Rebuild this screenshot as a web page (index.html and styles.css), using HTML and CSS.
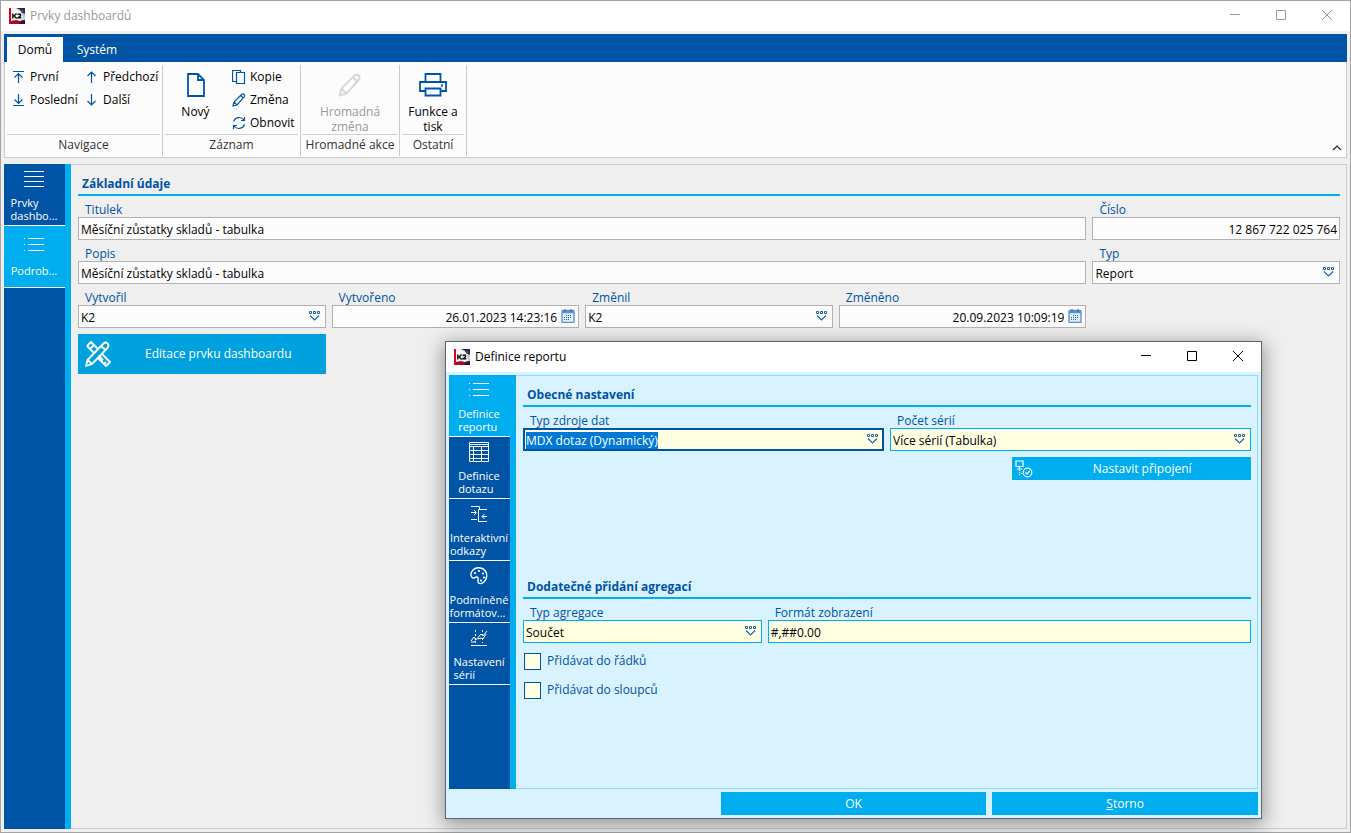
FILE: index.html
```html
<!DOCTYPE html>
<html lang="cs">
<head>
<meta charset="utf-8">
<title>Prvky dashboardů</title>
<link rel="stylesheet" href="styles.css">
</head>
<body>
<svg class="sprite" aria-hidden="true">
  <symbol id="logo" viewBox="0 0 16 16">
    <rect width="16" height="16" fill="#f4f4f7"/>
    <path d="M7 0h9v6l-3-1-2-3z" fill="#2b2b48"/>
    <path d="M9 1l2 1-1 1zM13 2l1 1-1 1z" fill="#b9b9cc"/>
    <path d="M13 6h3v7l-2-1z" fill="#c9c9d6"/>
    <path d="M2 16v-3l5-1 4 1 3-1 2 1v3z" fill="#a01020"/>
    <path d="M10 16l2-3 4-1v4z" fill="#2a1730"/>
    <rect width="2" height="16" fill="#e2001a"/>
    <path d="M3.800 5.500v5M7.500 5.500L5 8l2.700 2.500M8.500 6.200h3v1.600L9 9.800h3.300" fill="none" stroke="#111" stroke-width="1.400"/>
  </symbol>
  <symbol id="combo" viewBox="0 0 12 11">
    <path d="M.5.500h2v2h-2zM4.500.500h2v2h-2zM8.500.500h2v2h-2z" fill="none" stroke="#1a5fb0" stroke-width="1"/>
    <path d="M1 4.500l4.500 4.500L10 4.500" fill="none" stroke="#1a5fb0" stroke-width="1.100"/>
  </symbol>
  <symbol id="calendar" viewBox="0 0 14 14">
    <rect x="1" y="1.500" width="12" height="12" rx="1" fill="#e3eefa" stroke="#5b93d0" stroke-width="1.400"/>
    <path d="M1 3h12" stroke="#5b93d0" stroke-width="2.500"/>
    <path d="M4 0v3M10 0v3" stroke="#2a67b2"/>
    <path d="M5 6.500h6M3 8.500h8M3 10.500h6" stroke="#1a5fb0" stroke-dasharray="1 1"/>
  </symbol>
  <symbol id="pencil" viewBox="0 0 14 14">
    <path d="M1 13l1-4L9.800 1.300q1.200-.8 2.200.2t.2 2.300L5 12zM2 9l3 3M8.600 2.500l2.700 2.700" fill="none" stroke="currentColor" stroke-width="1.200"/>
  </symbol>
  <symbol id="list" viewBox="0 0 20 15">
    <path d="M4 1.500h16M4 7.500h16M4 13.500h16M0 1.500h1M0 7.500h1M0 13.500h1" stroke="#fff" stroke-width="1"/>
  </symbol>
  <symbol id="win-min" viewBox="0 0 10 10"><path d="M0 4.500h10" stroke="currentColor"/></symbol>
  <symbol id="win-max" viewBox="0 0 10 10"><path d="M.5.500h9v9h-9z" fill="none" stroke="currentColor"/></symbol>
  <symbol id="win-close" viewBox="0 0 10 10"><path d="M0 0l10 10M10 0L0 10" stroke="currentColor"/></symbol>
</svg>

<div class="window">
  <header class="titlebar inactive">
    <svg class="i16"><use href="#logo"/></svg>
    <h1 class="title">Prvky dashboardů</h1>
    <button class="winbtn" aria-label="Minimalizovat"><svg class="i10"><use href="#win-min"/></svg></button>
    <button class="winbtn" aria-label="Maximalizovat"><svg class="i10"><use href="#win-max"/></svg></button>
    <button class="winbtn" aria-label="Zavřít"><svg class="i10"><use href="#win-close"/></svg></button>
  </header>

  <nav class="tabs">
    <button class="tab active">Domů</button>
    <button class="tab">Systém</button>
  </nav>

  <div class="ribbon">
    <section class="group nav-group">
      <div class="tools">
        <div class="toolcol first">
          <button class="tool"><svg class="i12" viewBox="0 0 12 12"><path d="M0 .5h11M5.500 12V2.500M1.500 6.500l4-4 4 4" class="ln"/></svg>První</button>
          <button class="tool"><svg class="i12" viewBox="0 0 12 12"><path d="M0 11.500h11M5.500 0v9.500M1.500 5.500l4 4 4-4" class="ln"/></svg>Poslední</button>
        </div>
        <div class="toolcol">
          <button class="tool"><svg class="i12" viewBox="0 0 12 12"><path d="M5.500 12V1M1.500 5l4-4 4 4" class="ln"/></svg>Předchozí</button>
          <button class="tool"><svg class="i12" viewBox="0 0 12 12"><path d="M5.500 0v11M1.500 7l4 4 4-4" class="ln"/></svg>Další</button>
        </div>
      </div>
      <h2 class="caption">Navigace</h2>
    </section>
    <section class="group rec-group">
      <div class="tools">
        <button class="bigtool new"><svg class="bigicon" viewBox="0 0 28 24"><path d="M6 1h10l6 6v16H6zM16 1v6h6" class="ln thick"/></svg>Nový</button>
        <div class="toolcol">
          <button class="tool tight"><svg class="i14" viewBox="0 0 14 14"><path d="M4 11.500H.5V.5h8V3M4.500 2.500h8v11h-8z" class="ln"/></svg>Kopie</button>
          <button class="tool tight"><svg class="i14 blue"><use href="#pencil"/></svg>Změna</button>
          <button class="tool tight"><svg class="i14" viewBox="0 0 14 14"><path d="M1.500 5.500a6 6 0 0 1 10.500-1.500M12.500 8.500a6 6 0 0 1-10.500 1.500M12.500 1v3.500H9M1.500 13V9.500H5" class="ln"/></svg>Obnovit</button>
        </div>
      </div>
      <h2 class="caption">Záznam</h2>
    </section>
    <section class="group bulk-group">
      <div class="tools center">
        <button class="bigtool" disabled><svg class="bigicon pale"><use href="#pencil"/></svg>Hromadná<br>změna</button>
      </div>
      <h2 class="caption">Hromadné akce</h2>
    </section>
    <section class="group other-group">
      <div class="tools center">
        <button class="bigtool"><svg class="bigicon" viewBox="0 0 28 24"><path d="M6.500 9V1h15v8M6.500 18H1V9h26v9h-5.500M6.500 15.500h15v7h-15zM22 12.500h2" class="ln thick"/></svg>Funkce a<br>tisk</button>
      </div>
      <h2 class="caption">Ostatní</h2>
    </section>
    <button class="collapse" aria-label="Sbalit pás karet"><svg class="i10" viewBox="0 0 10 10"><path d="M1 7l4-4 4 4" fill="none" stroke="#222" stroke-width="1.200"/></svg></button>
  </div>

  <main class="body">
    <nav class="side">
      <button class="sideitem"><svg class="sideicon" viewBox="0 0 20 20"><path d="M0 2.500h20M0 7.500h20M0 12.500h20M0 17.500h20" class="wl"/></svg><span class="sidetext">Prvky<br>dashbo...</span></button>
      <button class="sideitem single active"><svg class="sideicon"><use href="#list" y="2" width="20" height="15"/></svg><span class="sidetext">Podrob...</span></button>
    </nav>
    <form class="panel">
      <h2 class="heading">Základní údaje</h2>
      <div class="fields five">
        <div class="field span4"><label for="titulek">Titulek</label><input class="box" id="titulek" value="Měsíční zůstatky skladů - tabulka"></div>
        <div class="field"><label for="cislo">Číslo</label><input class="box num" id="cislo" value="12 867 722 025 764"></div>
        <div class="field span4"><label for="popis">Popis</label><input class="box" id="popis" value="Měsíční zůstatky skladů - tabulka"></div>
        <div class="field"><label for="typ">Typ</label><div class="holder"><select class="box" id="typ"><option>Report</option></select><svg class="mark"><use href="#combo"/></svg></div></div>
        <div class="field"><label for="vytvoril">Vytvořil</label><div class="holder"><select class="box" id="vytvoril"><option>K2</option></select><svg class="mark"><use href="#combo"/></svg></div></div>
        <div class="field"><label for="vytvoreno">Vytvořeno</label><div class="holder"><input class="box num dated" id="vytvoreno" value="26.01.2023 14:23:16"><svg class="mark cal"><use href="#calendar"/></svg></div></div>
        <div class="field"><label for="zmenil">Změnil</label><div class="holder"><select class="box" id="zmenil"><option>K2</option></select><svg class="mark"><use href="#combo"/></svg></div></div>
        <div class="field"><label for="zmeneno">Změněno</label><div class="holder"><input class="box num dated" id="zmeneno" value="20.09.2023 10:09:19"><svg class="mark cal"><use href="#calendar"/></svg></div></div>
        <button type="button" class="action edit"><svg class="editicon" viewBox="0 0 26 26"><g fill="none" stroke="#fff" stroke-width="1.800" stroke-linejoin="round"><path d="M2 5l4-4 7 7M17 13l8 8-4 4-8-8M9 12L2 5M5 8l2-2M9 4L7 6M16 20l2-2M19 23l2-2M14 15l4 4"/><path d="M1 25l1.500-6L18.500 2.500q2-2 4 0t0 4.500L7 23zM2.500 19L7 23M16 5l5 4.500"/></g></svg><span class="label">Editace prvku dashboardu</span></button>
      </div>
    </form>
  </main>
</div>

<section class="dialog" role="dialog" aria-labelledby="dlg-title">
  <header class="titlebar">
    <svg class="i16"><use href="#logo"/></svg>
    <h1 class="title" id="dlg-title">Definice reportu</h1>
    <button class="winbtn" aria-label="Minimalizovat"><svg class="i10"><use href="#win-min"/></svg></button>
    <button class="winbtn" aria-label="Maximalizovat"><svg class="i10"><use href="#win-max"/></svg></button>
    <button class="winbtn" aria-label="Zavřít"><svg class="i10"><use href="#win-close"/></svg></button>
  </header>
  <div class="dialogbody">
    <nav class="side">
      <button class="sideitem active"><svg class="sideicon"><use href="#list" y="2" width="20" height="15"/></svg><span class="sidetext">Definice<br>reportu</span></button>
      <button class="sideitem"><svg class="sideicon" viewBox="0 0 20 20"><path d="M.5.500h19v19H.5zM0 2.500h20M0 4.500h20M0 8.500h20M0 12.500h20M0 16.500h20M4.500 4v16M12.500 4v16" class="wl"/></svg><span class="sidetext">Definice<br>dotazu</span></button>
      <button class="sideitem"><svg class="sideicon" viewBox="0 0 20 20"><path d="M2 2.500h8.500v3M2 15.500h6M18 5.500H9.500v12H18M2 8.500h5M5 6l2.500 2.500L5 11M18 12.500h-5M15.500 10L13 12.500l2.500 2.500" class="wl"/></svg><span class="sidetext">Interaktivní<br>odkazy</span></button>
      <button class="sideitem"><svg class="sideicon" viewBox="0 0 20 20"><path d="M4 4C7 1 13 1 16 4.500s1.800 9-1 11.500-6 2-6-.5 1-4-1-4.500-3 2.500-5 .5S2 6 4 4z" class="wl bold"/><g fill="#fff"><circle cx="6" cy="7" r="1.100"/><circle cx="10" cy="5" r="1.100"/><circle cx="14" cy="7.500" r="1.100"/><circle cx="15" cy="11.500" r="1.100"/><circle cx="12" cy="14.500" r="1.100"/></g></svg><span class="sidetext">Podmíněné<br>formátov...</span></button>
      <button class="sideitem"><svg class="sideicon" viewBox="0 0 20 20"><path d="M2 17.500h16M2 13l3-4 2 3 5-6 2 2 4-5M2 14h3l2-1M9 11l3-1 2 1 3-5" class="wl"/><path d="M6.500 2v13M13.500 2v13" class="wl" stroke-dasharray="2 2"/></svg><span class="sidetext">Nastavení<br>sérií</span></button>
    </nav>
    <form class="panel">
      <section class="block">
        <h2 class="heading">Obecné nastavení</h2>
        <div class="fields six">
          <div class="field span3"><label for="zdroj">Typ zdroje dat</label><div class="holder"><input class="box focused" id="zdroj" role="combobox" aria-expanded="false" value="MDX dotaz (Dynamický)"><svg class="mark"><use href="#combo"/></svg></div></div>
          <div class="field span3"><label for="serie">Počet sérií</label><div class="holder"><select class="box" id="serie"><option>Více sérií (Tabulka)</option></select><svg class="mark"><use href="#combo"/></svg></div></div>
          <button type="button" class="action connect"><svg class="connecticon" viewBox="0 0 18 18"><g fill="none" stroke="#fff" stroke-width="1.200"><path d="M1 1h7v5.500H1zM4.500 6.500V9M2 9h5"/><path d="M4.500 10v6M7 13.500H6" stroke-dasharray="1 1"/><circle cx="12.500" cy="12.500" r="4.300"/><path d="M10.500 12.500l1.500 1.500 2.800-3"/></g></svg><span class="label">Nastavit připojení</span></button>
        </div>
      </section>
      <section class="block last">
        <h2 class="heading">Dodatečné přidání agregací</h2>
        <div class="fields six">
          <div class="field span2"><label for="agregace">Typ agregace</label><div class="holder"><select class="box" id="agregace"><option>Součet</option></select><svg class="mark"><use href="#combo"/></svg></div></div>
          <div class="field span4"><label for="format">Formát zobrazení</label><input class="box" id="format" value="#,##0.00"></div>
        </div>
        <div class="checks">
          <label class="check"><input type="checkbox">Přidávat do řádků</label>
          <label class="check"><input type="checkbox">Přidávat do sloupců</label>
        </div>
      </section>
    </form>
  </div>
  <footer class="footer">
    <button class="action ok">OK</button>
    <button class="action"><span><u>S</u>torno</span></button>
  </footer>
</section>
<script>
  const source = document.getElementById("zdroj");
  source.focus();
  source.select();
</script>
</body>
</html>
```

FILE: styles.css
```css
* { box-sizing: border-box; }
body {
  margin: 0;
  font: 12px/16px "Open Sans", "Noto Sans", sans-serif;
  color: #000;
  background: #efefef;
}
button, input, select { font: inherit; color: inherit; margin: 0; }
button { border: 0; padding: 0; background: none; }
h1, h2 { margin: 0; font-size: inherit; font-weight: 400; }
svg { display: block; flex: none; }
.sprite { position: absolute; width: 0; height: 0; }
.i10 { width: 10px; height: 10px; }
.i12 { width: 12px; height: 12px; }
.i14 { width: 14px; height: 14px; }
.i16 { width: 16px; height: 16px; }
.blue { color: #0054a6; }
.ln { fill: none; stroke: #0054a6; stroke-width: 1.2; }
.thick { stroke-width: 1.8; }
.wl { fill: none; stroke: #fff; stroke-width: 1; }
.bold { stroke-width: 1.4; }

.window {
  display: flex;
  flex-direction: column;
  min-height: 100vh;
  border: 1px solid #a3a3a3;
  background: #efefef;
}
.titlebar {
  display: flex;
  align-items: center;
  height: 30px;
  padding-left: 8px;
  background: #fff;
}
.titlebar .title { flex: 1; padding-left: 5px; }
.inactive { color: #999; }
.winbtn { display: flex; align-items: center; justify-content: center; width: 46px; height: 30px; padding-bottom: 2px; }

.tabs {
  display: flex;
  align-items: flex-end;
  height: 28px;
  margin: 3px 3px 0;
  padding-left: 3px;
  background: #0054a6;
}
.tab { width: 56px; height: 25px; color: #fff; }
.tab + .tab { margin-left: 6px; }
.tab.active { background: #fcfcfc; color: #000; }

.ribbon {
  display: flex;
  margin: 0 3px;
  padding-top: 3px;
  border: 1px solid #cbcbcb;
  border-top: 0;
  background: #fcfcfc;
}
.group {
  display: flex;
  flex-direction: column;
  height: 91px;
  padding: 0 2px;
  margin-bottom: 1px;
  border-right: 1px solid #cbcbcb;
}
.nav-group { width: 158px; }
.rec-group { width: 138px; }
.bulk-group { width: 99px; }
.other-group { width: 67px; }
.tools { display: flex; height: 70px; border-bottom: 1px solid #d0d0d0; }
.center { justify-content: center; }
.caption { line-height: 20px; text-align: center; color: #333; white-space: nowrap; }
.toolcol { display: flex; flex-direction: column; }
.first { width: 73px; }
.tool { display: flex; align-items: center; gap: 5px; height: 23px; padding-left: 6px; white-space: nowrap; }
.tight { gap: 4px; }
.bigtool { display: flex; flex-direction: column; align-items: center; padding-top: 8px; line-height: 15px; white-space: nowrap; }
.bigtool:disabled { color: #9a9a9a; }
.bigicon { width: 28px; height: 24px; margin-bottom: 7px; }
.pale { color: #d8d8d8; }
.new { width: 61px; }
.collapse { align-self: flex-end; margin: 0 4px 4px auto; }

.body { display: flex; flex: 1; margin: 6px 3px 3px; }
.side {
  width: 67px;
  flex: none;
  border-right: 6px solid #00adef;
  background: #0054a6;
}
.sideitem {
  display: flex;
  flex-direction: column;
  align-items: center;
  width: 100%;
  height: 62px;
  padding: 5px 1px 0 0;
  border-bottom: 1px solid #fff;
  color: #fff;
  font-size: 11px;
  line-height: 13px;
  text-align: left;
}
.sideitem.active { background: #00adef; }
.sideitem.single { padding-top: 9px; }
.single .sideicon { margin-bottom: 9px; }
.sideicon { width: 20px; height: 20px; margin-bottom: 7px; }
.sidetext { white-space: nowrap; }

.panel {
  flex: 1;
  min-width: 0;
  padding: 10px 6px 6px 7px;
  border: 1px solid #cbcbcb;
  border-left: 0;
}
.heading {
  padding: 1px 4px 2px;
  border-bottom: 2px solid #00adef;
  color: #0054a6;
  font-weight: 700;
  line-height: 16px;
}
.fields { display: grid; gap: 6px; padding-top: 6px; }
.five { grid-template-columns: repeat(5, minmax(0, 1fr)); }
.six { grid-template-columns: repeat(6, minmax(0, 1fr)); }
.span2 { grid-column: span 2; }
.span3 { grid-column: span 3; }
.span4 { grid-column: span 4; }
.field label { display: block; padding-left: 7px; line-height: 15px; color: #0054a6; }
.holder { position: relative; }
.box {
  display: block;
  width: 100%;
  height: 23px;
  padding: 2px 2px 0;
  border: 1px solid #b2b2b2;
  border-radius: 0;
  outline: 0;
  background: #fcfcfc;
  appearance: none;
}
.box::selection { background: #0078d7; color: #fff; }
.num { text-align: right; }
.dated { padding-right: 21px; }
.mark { position: absolute; right: 5px; top: 6px; width: 12px; height: 11px; pointer-events: none; }
.cal { right: 4px; top: 4px; width: 14px; height: 14px; }

.action {
  display: flex;
  align-items: center;
  justify-content: center;
  height: 23px;
  background: #00adef;
  color: #fff;
}
.action .label { flex: 1; }
.edit { grid-column: 1; height: 40px; padding-left: 7px; background: #00a1df; }
.editicon { width: 26px; height: 26px; }
.connect { grid-column: 5 / 7; padding-left: 3px; }
.connecticon { width: 18px; height: 18px; }

.dialog {
  position: absolute;
  left: 445px;
  top: 341px;
  width: 817px;
  border: 1px solid #5f666b;
  background: #d9f2ff;
  box-shadow: 0 4px 18px 2px rgba(0, 0, 0, 0.38);
}
.dialogbody { display: flex; padding: 3px; }
.dialog .panel { border-color: #8fdcfb; }
.dialog .box { border-color: #00adef; background: #ffffe1; }
.dialog .box.focused { border: 2px solid #0054a6; padding: 1px 1px 0; }
.block { min-height: 192px; }
.last { min-height: 204px; }
.checks { display: flex; flex-direction: column; gap: 11px; padding: 9px 1px; }
.check { display: flex; align-items: center; gap: 6px; height: 18px; color: #0054a6; }
.check input {
  width: 17px;
  height: 17px;
  margin: 0;
  border: 1px solid #0054a6;
  background: #ffffe1;
  appearance: none;
}
.footer {
  display: grid;
  grid-template-columns: repeat(3, minmax(0, 1fr));
  gap: 6px;
  padding: 0 3px 3px;
}
.ok { grid-column: 2; }
```
